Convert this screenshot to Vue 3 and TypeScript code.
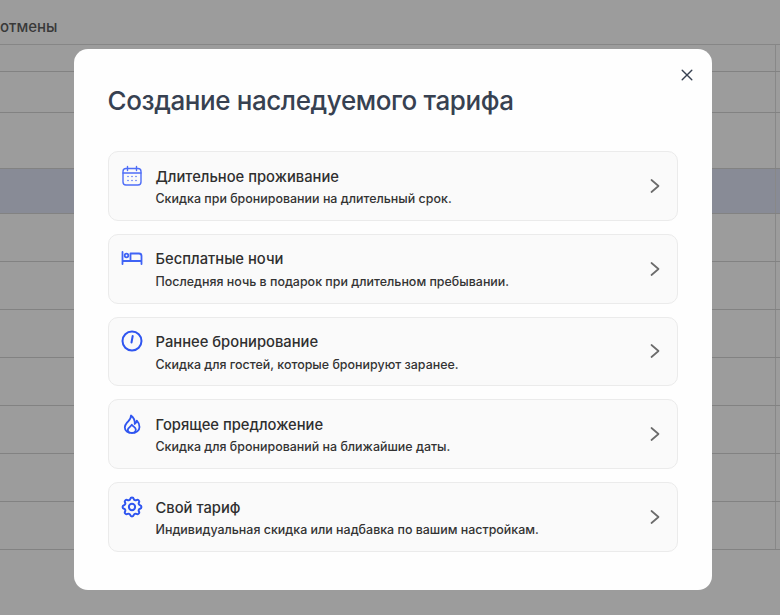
<script setup lang="ts">
interface Option { title: string; desc: string; icon: string }
const options: Option[] = [
  { title: 'Длительное проживание', desc: 'Скидка при бронировании на длительный срок.', icon: 'calendar' },
  { title: 'Бесплатные ночи', desc: 'Последняя ночь в подарок при длительном пребывании.', icon: 'bed' },
  { title: 'Раннее бронирование', desc: 'Скидка для гостей, которые бронируют заранее.', icon: 'clock' },
  { title: 'Горящее предложение', desc: 'Скидка для бронирований на ближайшие даты.', icon: 'fire' },
  { title: 'Свой тариф', desc: 'Индивидуальная скидка или надбавка по вашим настройкам.', icon: 'gear' },
]
const rows = [
  { h: 27, active: false },
  { h: 41, active: false },
  { h: 56, active: false },
  { h: 45, active: true },
  { h: 48, active: false },
  { h: 48, active: false },
  { h: 48, active: false },
  { h: 48, active: false },
  { h: 48, active: false },
  { h: 48, active: false },
  { h: 48, active: false },
]
</script>

<template>
  <div class="page">
    <div class="table">
      <div class="head">отмены</div>
      <div
        v-for="(r, i) in rows"
        :key="i"
        class="row"
        :class="{ active: r.active }"
        :style="{ height: r.h + 'px' }"
      >
        <span class="cell"></span>
      </div>
    </div>
    <div class="overlay">
      <section class="modal">
        <button class="close" aria-label="Закрыть">
          <svg width="12" height="12" viewBox="0 0 12 12" fill="none" stroke="#374151" stroke-width="1.4" stroke-linecap="round">
            <path d="M1.2 1.2 10.8 10.8M10.8 1.2 1.2 10.8" />
          </svg>
        </button>
        <h1 class="title">Создание наследуемого тарифа</h1>
        <div class="list">
          <div v-for="o in options" :key="o.title" class="card">
            <span class="icon">
              <svg v-if="o.icon === 'calendar'" width="22" height="22" viewBox="0 0 22 22" fill="none" stroke="#4f6ef7" stroke-width="1.4" stroke-linecap="round" stroke-linejoin="round">
                <rect x="2" y="3.5" width="18" height="16.5" rx="3" />
                <path d="M2 8h18M6.500 1.500v4M15.500 1.500v4" />
                <path d="M7 11.500h.01M11 11.500h.01M15 11.500h.01M7 15.500h.01M11 15.500h.01M15 15.500h.01" stroke-width="1.500" />
              </svg>
              <svg v-else-if="o.icon === 'bed'" width="22" height="22" viewBox="0 0 22 22" fill="none" stroke="#3f63f5" stroke-width="1.800" stroke-linecap="round" stroke-linejoin="round">
                <path d="M1.500 5v12M1.500 14h19M20.500 17V9a2.500 2.500 0 0 0-2.500-2.500H9.500V14" />
                <circle cx="5.500" cy="8.500" r="1.800" />
              </svg>
              <svg v-else-if="o.icon === 'clock'" width="22" height="22" viewBox="0 0 22 22" fill="none" stroke="#2f55f0" stroke-width="2" stroke-linecap="round">
                <circle cx="11" cy="11" r="9.500" />
                <path d="M11.700 6 10.500 12.500" />
              </svg>
              <svg v-else-if="o.icon === 'fire'" width="22" height="22" viewBox="0 0 22 22" fill="none" stroke="#2f55f0" stroke-width="1.800" stroke-linecap="round" stroke-linejoin="round">
                <path d="M10 2.500c.3 3.200-2 4.800-4 7.200-1.700 2.100-2.200 3.300-2.200 4.500 0 3.600 3 5.800 7.200 5.800s7.500-2.400 7.500-6c0-2.500-1.100-4.700-2.700-6.300-.3 1.800-1 2.800-2.100 3.300C13.900 7.700 12.500 4.200 10 2.500Z" />
                <path d="M8.300 19.600c-1.300-.9-1.800-2.200-1.300-3.600.5-1.300 2.500-2.300 3.800-4.200 1.500 1.700 3.700 2.700 4 4.500.2 1.300-.4 2.500-1.500 3.300" />
              </svg>
              <svg v-else width="22" height="22" viewBox="1.500 1.500 21 21" fill="none" stroke="#2f55f0" stroke-width="1.900" stroke-linecap="round" stroke-linejoin="round">
                <path d="M10.325 4.317c.426-1.756 2.924-1.756 3.350 0a1.724 1.724 0 0 0 2.573 1.066c1.543-.940 3.310.826 2.370 2.370a1.724 1.724 0 0 0 1.065 2.572c1.756.426 1.756 2.924 0 3.350a1.724 1.724 0 0 0-1.066 2.573c.940 1.543-.826 3.310-2.370 2.370a1.724 1.724 0 0 0-2.572 1.065c-.426 1.756-2.924 1.756-3.350 0a1.724 1.724 0 0 0-2.573-1.066c-1.543.940-3.310-.826-2.370-2.370a1.724 1.724 0 0 0-1.065-2.572c-1.756-.426-1.756-2.924 0-3.350a1.724 1.724 0 0 0 1.066-2.573c-.940-1.543.826-3.310 2.370-2.370.996.608 2.296.070 2.572-1.065Z" />
                <circle cx="12" cy="12" r="3" />
              </svg>
            </span>
            <div class="text">
              <div class="name">{{ o.title }}</div>
              <div class="desc">{{ o.desc }}</div>
            </div>
            <svg class="chev" width="10" height="16" viewBox="0 0 10 16" fill="none" stroke="#6b6b6b" stroke-width="1.700" stroke-linecap="round" stroke-linejoin="round">
              <path d="M1.500 2 8.500 8 1.500 14" />
            </svg>
          </div>
        </div>
      </section>
    </div>
  </div>
</template>

<style>
html, body { margin: 0; padding: 0; }
</style>

<style scoped>
.page {
  position: relative;
  width: 780px;
  height: 615px;
  overflow: hidden;
  background: #fff;
  font-family: Inter, "Noto Sans", sans-serif;
}
.head {
  height: 45px;
  box-sizing: border-box;
  padding: 18px 0 0 0;
  font-size: 15px;
  line-height: 18px;
  font-weight: 500;
  color: #5e5e5e;
  border-bottom: 1px solid #dcdcdc;
}
.row {
  box-sizing: border-box;
  border-bottom: 1px solid #d4d4d4;
  display: flex;
  justify-content: flex-end;
}
.row.active { background: #dfe3f5; }
.cell {
  width: 4px;
  border-left: 1px solid #dedede;
}
.overlay {
  position: absolute;
  inset: 0;
  background: rgba(0, 0, 0, 0.39);
  padding: 49px 0 0 74px;
  box-sizing: border-box;
}
.modal {
  position: relative;
  width: 638px;
  height: 541px;
  box-sizing: border-box;
  padding: 0 34px;
  background: #fefefe;
  border-radius: 14px;
}
.close {
  position: absolute;
  top: 20px;
  right: 19px;
  padding: 0;
  width: 12px;
  height: 12px;
  border: 0;
  background: none;
  display: flex;
}
.title {
  margin: 0 0 0 -0.5px;
  padding-top: 35px;
  font-size: 26px;
  line-height: 33px;
  font-weight: 500;
  color: #374151;
  letter-spacing: -0.4px;
}
.list {
  margin-top: 34px;
  display: flex;
  flex-direction: column;
  gap: 13px;
}
.card {
  height: 69.750px;
  box-sizing: border-box;
  display: flex;
  align-items: flex-start;
  background: #fafafa;
  border: 1px solid #ebebeb;
  border-radius: 10px;
  padding: 0 17px 0 12px;
}
.icon {
  width: 22px;
  height: 22px;
  margin-top: 12.500px;
  display: flex;
  flex: none;
}
.text {
  flex: 1;
  margin-left: 12.500px;
  padding-top: 14.500px;
}
.name {
  font-size: 14.750px;
  line-height: 20px;
  font-weight: 500;
  color: #2f2f2f;
}
.desc {
  margin-top: 3.500px;
  font-size: 12.450px;
  line-height: 18px;
  font-weight: 500;
  color: #333;
}
.chev {
  flex: none;
  align-self: center;
}
</style>
